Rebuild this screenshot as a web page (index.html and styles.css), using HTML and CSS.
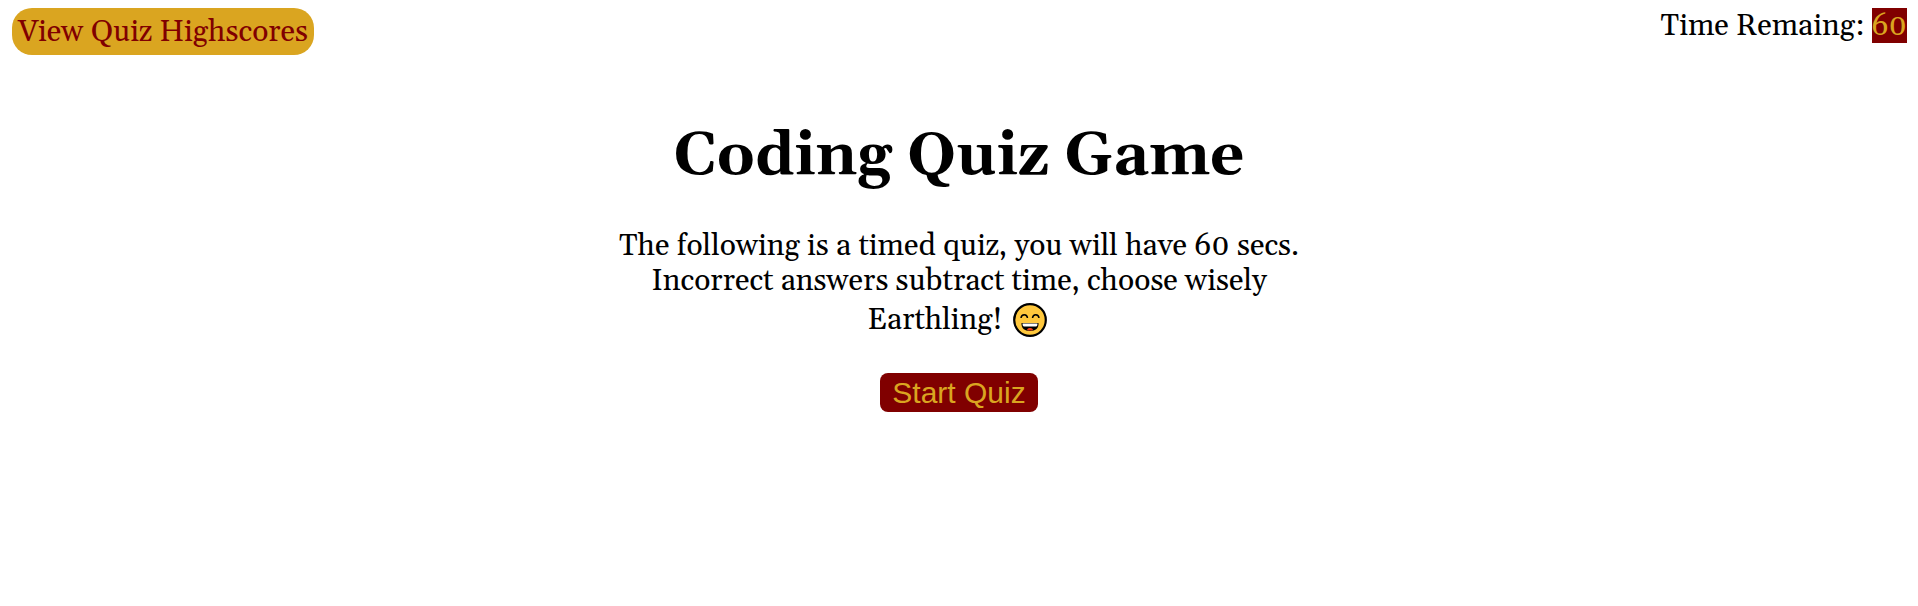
FILE: index.html
```html
<!DOCTYPE html>
<html lang="en">
<head>
  <meta charset="utf-8">
  <meta name="viewport" content="width=device-width, initial-scale=1">
  <title>Coding Quiz Game</title>
  <link rel="stylesheet" href="styles.css">
</head>
<body>
  <header class="top-bar">
    <a class="scores-link" href="#highscores">View Quiz Highscores</a>
    <div class="timer">Time Remaing: <span class="timer-value">60</span></div>
  </header>
  <main class="intro">
    <h1 class="title">Coding Quiz Game</h1>
    <p class="description">
      <span class="line">The following is a timed quiz, you will have 60 secs.</span>
      <span class="line">Incorrect answers subtract time, choose wisely</span>
      <span class="line last">Earthling!
        <svg class="emoji" viewBox="0 0 34 34" role="img" aria-label="grinning face">
          <circle cx="17" cy="17" r="15.8" fill="#ffc83d" stroke="#000" stroke-width="2.2"/>
          <path d="M8 15c.5-4.500 6-4.500 6.500 0M19.500 15c.5-4.500 6-4.500 6.500 0" fill="none" stroke="#000" stroke-width="1.500"/>
          <path d="M8.500 20h17c.5 5-3 8-8.500 8S8 25 8.500 20z" fill="#000"/>
          <path d="M9.500 20.500h15c0 2-.5 3-1.500 3H11c-1 0-1.500-1-1.500-3z" fill="#fff"/>
          <path d="M14 27c.5-2.600 5.500-2.600 6 0-1.500.8-4.500.8-6 0z" fill="#f03a17"/>
        </svg>
      </span>
    </p>
    <button class="start-button" type="button">Start Quiz</button>
  </main>
</body>
</html>
```
FILE: styles.css
```css
body {
  margin: 8px;
  background: #fff;
  color: #000;
  font-family: Georgia, Gelasio, "Liberation Serif", serif;
  font-size: 30px;
  line-height: 35px;
}

.top-bar {
  display: flex;
  justify-content: space-between;
  align-items: flex-start;
  padding: 0 3px 0 4px;
}

.scores-link {
  padding: 7px 6px 5px;
  border-radius: 20px;
  background: goldenrod;
  color: maroon;
  text-decoration: none;
}

.timer {
  line-height: 33px;
}

.timer-value {
  display: inline-block;
  padding-top: 2px;
  background: maroon;
  color: goldenrod;
}

.intro {
  display: flex;
  flex-direction: column;
  align-items: center;
  text-align: center;
}

.title {
  margin: 66px 0 0;
  font-size: 60px;
  line-height: 72px;
}

.description {
  margin: 36px 0 0;
}

.line {
  display: block;
}

.last {
  display: flex;
  justify-content: center;
  align-items: center;
  gap: 10px;
  padding-right: 4px;
  line-height: 42px;
}

.emoji {
  width: 34px;
  height: 34px;
}

.start-button {
  margin-top: 32px;
  padding: 2px 12px;
  border: 0;
  border-radius: 8px;
  background: maroon;
  color: goldenrod;
  font-family: Arial, "Liberation Sans", sans-serif;
  font-size: 30px;
  line-height: 35px;
}
```
